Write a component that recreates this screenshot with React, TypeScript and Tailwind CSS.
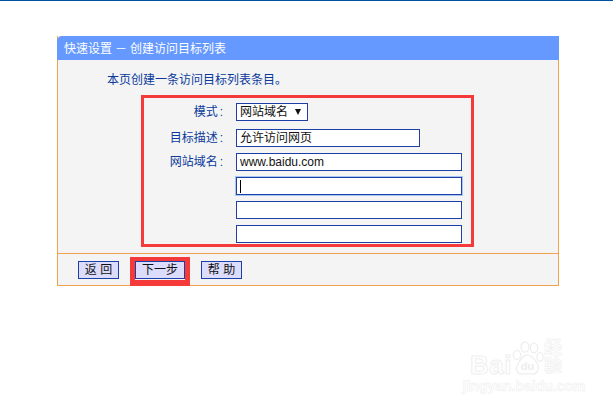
const font = "[font-family:'Liberation_Sans','Noto_Sans_CJK_SC',sans-serif]";

function Row({ label, children, className = "" }: { label?: string; children: React.ReactNode; className?: string }) {
  return (
    <div className={`flex h-[18px] items-center ${className}`}>
      <div className="w-[92px] shrink-0 pr-[13px] text-right text-[12px] leading-[18px] text-[#0b3a9c]">
        {label}
        {label && <span className="ml-[2px]">:</span>}
      </div>
      {children}
    </div>
  );
}

function Field({ w, value, focus }: { w: string; value?: string; focus?: boolean }) {
  return (
    <div
      className={`flex h-[18px] items-center border border-[#1c3fa8] bg-white pl-[3px] text-[12px] leading-[16px] text-[#111] ${w} ${
        focus ? "shadow-[0_0_0_1px_#a9c5f2]" : ""
      }`}
    >
      {value}
      {focus && <span className="h-[13px] w-px bg-black" />}
    </div>
  );
}

function Btn({ label, w }: { label: string; w: string }) {
  return (
    <div className={`flex h-[18px] items-center justify-center border border-[#1c3fa8] bg-[#dcdcfc] text-[12px] leading-[16px] text-[#111] ${w}`}>
      {label}
    </div>
  );
}

function Watermark() {
  return (
    <div className="absolute left-[470px] top-[341px] flex w-[108px] flex-col items-center">
      <div className="flex h-[35px] w-full items-end justify-between">
        <span className="font-['Liberation_Sans'] text-[26px] font-bold leading-[22px] tracking-[0.5px] text-white [-webkit-text-stroke:1px_#efefef]">Bai</span>
        <svg width="32" height="35" viewBox="0 0 32 35" fill="none" stroke="#ededed" strokeWidth="1.2" className="shrink-0">
          <ellipse cx="5" cy="14" rx="3.6" ry="4.6" />
          <ellipse cx="13" cy="6" rx="4" ry="5.2" />
          <ellipse cx="22" cy="7" rx="3.6" ry="5" />
          <ellipse cx="28" cy="16" rx="3.2" ry="4.4" />
          <path d="M15 14c4 0 7 3 10 8 3 6 0 12-6 11-3-.5-5-.5-8 0-6 1-8-5-5-10 3-5 5-9 9-9z" />
          <text x="15.5" y="29" textAnchor="middle" fontSize="11" fontWeight="700" fontFamily="'Liberation Sans',sans-serif" fill="#ededed" stroke="none">
            du
          </text>
        </svg>
        <span className="mb-px text-[18px] font-bold leading-[18px] text-white [-webkit-text-stroke:0.7px_#efefef]">经验</span>
      </div>
      <span className="mt-[4px] whitespace-nowrap font-['Liberation_Sans'] text-[14px] font-bold leading-[13px] text-white [-webkit-text-stroke:0.6px_#f0f0f0]">
        jingyan.baidu.com
      </span>
    </div>
  );
}

export default function App() {
  return (
    <div className={`relative h-[407px] w-[613px] overflow-hidden bg-white ${font}`}>
      <div className="h-px bg-[#0054a6]" />
      <div className="ml-[57px] mt-[35px] w-[502px] border-x border-b border-[#f2a14e] bg-[#f4f4f4]">
        <div className="-mx-px flex h-[24px] items-center rounded-tl-[5px] bg-[#6699ff] pl-[7px] pt-px text-[12px] text-white">
          快速设置<span className="mx-[3px]">－</span>创建访问目标列表
        </div>
        <div className="h-[193px] pl-[49px] pt-[12px]">
          <div className="text-[12px] leading-[16px] text-[#0b3a9c]">本页创建一条访问目标列表条目。</div>
          <div className="ml-[34px] mt-[7px] flex h-[152px] w-[333px] flex-col gap-[6px] border-[3px] border-[#f53a3a] pt-[5px]">
            <Row label="模式" className="mb-[2px]">
              <div className="flex h-[18px] w-[72px] items-center border border-[#1c3fa8] bg-white pl-[3px] text-[12px] text-[#111]">
                网站域名
                <svg width="6" height="6" viewBox="0 0 6 6" className="ml-[7px]">
                  <path d="M0 0h6L3 6z" fill="#111" />
                </svg>
              </div>
            </Row>
            <Row label="目标描述">
              <Field w="w-[184px]" value="允许访问网页" />
            </Row>
            <Row label="网站域名">
              <Field w="w-[226px]" value="www.baidu.com" />
            </Row>
            <Row>
              <Field w="w-[226px]" focus />
            </Row>
            <Row>
              <Field w="w-[226px]" />
            </Row>
            <Row>
              <Field w="w-[226px]" />
            </Row>
          </div>
        </div>
        <div className="flex h-[32px] items-start border-t border-[#f2a14e] pl-[20px] pt-[7px]">
          <Btn label="返 回" w="w-[41px]" />
          <div className="-mt-[4px] ml-[11px] flex h-[29px] w-[60px] items-start justify-center border-x-[5px] border-b-[6px] border-t-[4px] border-[#f53a3a]">
            <Btn label="下一步" w="w-[50px] shrink-0" />
          </div>
          <div className="ml-[11px]">
            <Btn label="帮 助" w="w-[41px]" />
          </div>
        </div>
      </div>
      <Watermark />
    </div>
  );
}
